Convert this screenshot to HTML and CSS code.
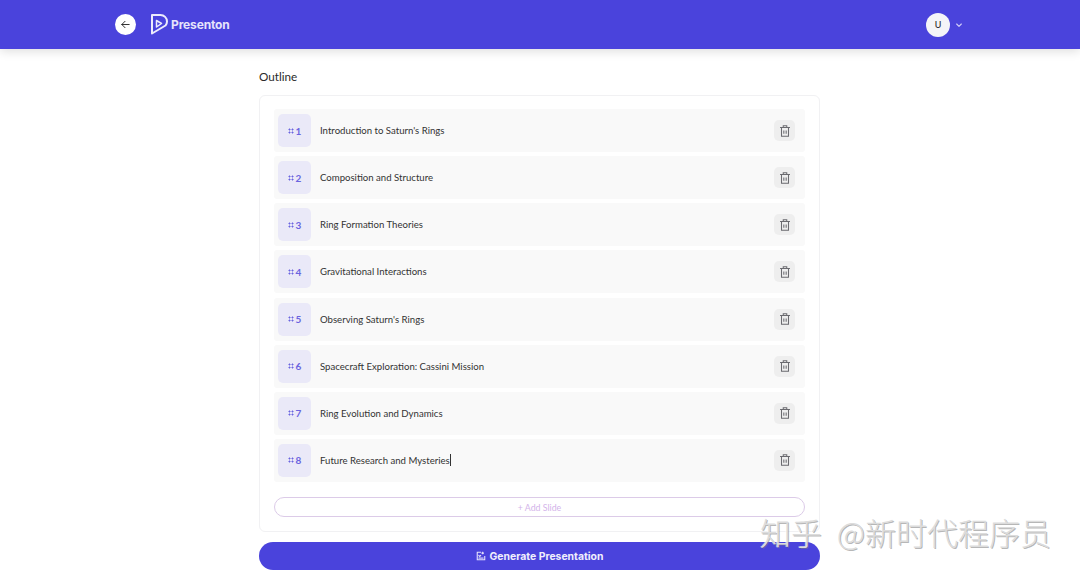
FILE: index.html
```html
<!DOCTYPE html>
<html lang="en">
<head>
  <meta charset="UTF-8">
  <title>Presenton</title>
  <link rel="stylesheet" href="styles.css">
</head>
<body>

<header class="topbar">
  <div class="topbar-left">
    <a class="back" href="#">
      <svg width="11" height="11" viewBox="0 0 24 24" fill="none" stroke="#222" stroke-width="2" stroke-linecap="round" stroke-linejoin="round"><path d="M20 12H4"/><path d="M11 5l-7 7 7 7"/></svg>
    </a>
    <a class="logo" href="#">
      <svg width="17" height="21" viewBox="0 0 17 21" fill="none" stroke="#ecebfc" stroke-width="2" stroke-linejoin="round"><path d="M1 1h8.500a6.500 6.500 0 0 1 6.500 6.500c0 1.600-.6 3-1.500 4L1 19.500z"/><path d="M5.500 6.500l5 3-5 3.500z" stroke-width="1.500"/></svg>
      <span>Presenton</span>
    </a>
  </div>
  <div class="user">
    <span class="avatar">U</span>
    <svg width="8" height="8" viewBox="0 0 24 24" fill="none" stroke="#cfcbf7" stroke-width="3.500" stroke-linecap="round" stroke-linejoin="round"><path d="M5 9l7 7 7-7"/></svg>
  </div>
</header>

<main class="page">
  <h2 class="title">Outline</h2>

  <section class="outline">
    <div class="row">
      <span class="num"><i class="grip"></i>1</span>
      <span class="text">Introduction to Saturn's Rings</span>
      <button class="del"><svg class="trash" viewBox="0 0 24 24"><path d="M3.500 6h17"/><path d="M9 6V3h6v3"/><path d="M6 6v15h12V6"/><path d="M10 11v5.500M14 11v5.500"/></svg></button>
    </div>
    <div class="row">
      <span class="num"><i class="grip"></i>2</span>
      <span class="text">Composition and Structure</span>
      <button class="del"><svg class="trash" viewBox="0 0 24 24"><path d="M3.500 6h17"/><path d="M9 6V3h6v3"/><path d="M6 6v15h12V6"/><path d="M10 11v5.500M14 11v5.500"/></svg></button>
    </div>
    <div class="row">
      <span class="num"><i class="grip"></i>3</span>
      <span class="text">Ring Formation Theories</span>
      <button class="del"><svg class="trash" viewBox="0 0 24 24"><path d="M3.500 6h17"/><path d="M9 6V3h6v3"/><path d="M6 6v15h12V6"/><path d="M10 11v5.500M14 11v5.500"/></svg></button>
    </div>
    <div class="row">
      <span class="num"><i class="grip"></i>4</span>
      <span class="text">Gravitational Interactions</span>
      <button class="del"><svg class="trash" viewBox="0 0 24 24"><path d="M3.500 6h17"/><path d="M9 6V3h6v3"/><path d="M6 6v15h12V6"/><path d="M10 11v5.500M14 11v5.500"/></svg></button>
    </div>
    <div class="row">
      <span class="num"><i class="grip"></i>5</span>
      <span class="text">Observing Saturn's Rings</span>
      <button class="del"><svg class="trash" viewBox="0 0 24 24"><path d="M3.500 6h17"/><path d="M9 6V3h6v3"/><path d="M6 6v15h12V6"/><path d="M10 11v5.500M14 11v5.500"/></svg></button>
    </div>
    <div class="row">
      <span class="num"><i class="grip"></i>6</span>
      <span class="text">Spacecraft Exploration: Cassini Mission</span>
      <button class="del"><svg class="trash" viewBox="0 0 24 24"><path d="M3.500 6h17"/><path d="M9 6V3h6v3"/><path d="M6 6v15h12V6"/><path d="M10 11v5.500M14 11v5.500"/></svg></button>
    </div>
    <div class="row">
      <span class="num"><i class="grip"></i>7</span>
      <span class="text">Ring Evolution and Dynamics</span>
      <button class="del"><svg class="trash" viewBox="0 0 24 24"><path d="M3.500 6h17"/><path d="M9 6V3h6v3"/><path d="M6 6v15h12V6"/><path d="M10 11v5.500M14 11v5.500"/></svg></button>
    </div>
    <div class="row">
      <span class="num"><i class="grip"></i>8</span>
      <span class="text caret">Future Research and Mysteries</span>
      <button class="del"><svg class="trash" viewBox="0 0 24 24"><path d="M3.500 6h17"/><path d="M9 6V3h6v3"/><path d="M6 6v15h12V6"/><path d="M10 11v5.500M14 11v5.500"/></svg></button>
    </div>

    <button class="add">+ Add Slide</button>
  </section>

  <button class="generate">
    <svg width="10" height="10" viewBox="0 0 12 12" fill="none" stroke="#e6e4fb" stroke-width="1.300"><path d="M6 1.500H1.500v9h9V6"/><path d="M3 5l1.500 1.500L6 5"/><path d="M8 1v3M6.500 2.500h3"/><path d="M3 8.500h6"/></svg>
    Generate Presentation
  </button>
</main>

<div class="watermark">知乎 @新时代程序员</div>

</body>
</html>
```

FILE: styles.css
```css
* {
  margin: 0;
  padding: 0;
  box-sizing: border-box;
}

body {
  height: 578px;
  overflow: hidden;
  background-color: #fff;
  font-family: "Lato", "Liberation Sans", sans-serif;
  position: relative;
}

a {
  text-decoration: none;
}

button {
  font-family: inherit;
  border: none;
  cursor: pointer;
}

.topbar {
  height: 49px;
  padding: 0 117px 0 115px;
  background-color: #4a43dc;
  box-shadow: 0 2px 10px rgba(0, 0, 0, .14);
  display: flex;
  align-items: center;
  justify-content: space-between;
}

.topbar-left {
  display: flex;
  align-items: center;
  gap: 15px;
}

.back {
  width: 21px;
  height: 21px;
  border-radius: 50%;
  background-color: #fff;
  display: flex;
  align-items: center;
  justify-content: center;
}

.logo {
  display: flex;
  align-items: center;
  gap: 3px;
  color: #e6e4fb;
  font-family: "Inter", sans-serif;
  font-size: 12px;
  font-weight: 700;
  letter-spacing: -.15px;
}

.user {
  display: flex;
  align-items: center;
  gap: 5px;
}

.avatar {
  width: 24px;
  height: 24px;
  border-radius: 50%;
  background-color: #f4f4f8;
  color: #333;
  font-family: "Inter", sans-serif;
  font-size: 9px;
  font-weight: 500;
  display: flex;
  align-items: center;
  justify-content: center;
}

.page {
  width: 561px;
  margin-left: 259px;
}

.title {
  height: 46px;
  padding-top: 19px;
  font-size: 11.700px;
  line-height: 16px;
  font-weight: 400;
  color: #2a2a2a;
}

.outline {
  height: 437px;
  padding: 13px 14px 0;
  border: 1px solid #f1f1f3;
  border-radius: 6px;
  display: flex;
  flex-direction: column;
  gap: 4.150px;
}

.row {
  height: 43px;
  flex-shrink: 0;
  padding: 0 10px 0 4px;
  background-color: #f9f9f9;
  border-radius: 3px;
  display: flex;
  align-items: center;
}

.num {
  width: 33px;
  height: 33px;
  border-radius: 5px;
  background-color: #eae9f8;
  color: #6a64e0;
  font-size: 10px;
  font-weight: 700;
  display: flex;
  align-items: center;
  justify-content: center;
  gap: 2px;
}

.grip {
  width: 6px;
  height: 6px;
  background-image: radial-gradient(circle, #6a64e0 .9px, transparent 1.100px);
  background-size: 3px 3px;
}

.text {
  margin-left: 9px;
  flex: 1;
  font-size: 9.600px;
  font-weight: 400;
  color: #333;
}

.caret::after {
  content: "";
  display: inline-block;
  width: 1px;
  height: 12px;
  background-color: #333;
  vertical-align: -2px;
}

.del {
  width: 21px;
  height: 21px;
  border-radius: 5px;
  background-color: #eeeeee;
  display: flex;
  align-items: center;
  justify-content: center;
}

.trash {
  width: 14px;
  height: 14px;
  fill: none;
  stroke: #6b6b70;
  stroke-width: 1.800;
}

.add {
  height: 20px;
  flex-shrink: 0;
  margin-top: 11px;
  background-color: #fff;
  border: 1px solid #dccbe8;
  border-radius: 10px;
  color: #d3b4ea;
  font-size: 8.800px;
}

.generate {
  width: 100%;
  height: 28px;
  margin-top: 10px;
  border-radius: 14px;
  background-color: #4a43dc;
  color: #f0effc;
  font-family: "Inter", sans-serif;
  font-size: 10.400px;
  font-weight: 700;
  display: flex;
  align-items: center;
  justify-content: center;
  gap: 4px;
}

.watermark {
  position: absolute;
  left: 760px;
  top: 512px;
  font-family: "Noto Sans CJK SC", sans-serif;
  font-size: 31px;
  font-weight: 300;
  line-height: 40px;
  word-spacing: 8px;
  white-space: nowrap;
  color: #dcdcdc;
  text-shadow: 1px 1px 0 rgba(120, 120, 120, .55), -1px 0 0 rgba(255, 255, 255, .7);
}
```
